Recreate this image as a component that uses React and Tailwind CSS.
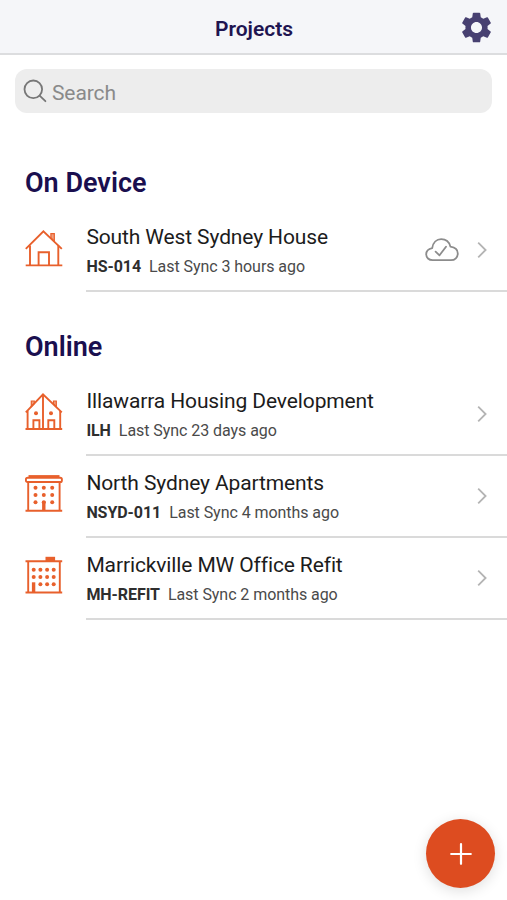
import { useState } from "react";
import { MdSettings } from "react-icons/md";

const onDevice = [
  { name: "South West Sydney House", code: "HS-014", sync: "Last Sync 3 hours ago", icon: HouseIcon, synced: true },
];

const online = [
  { name: "Illawarra Housing Development", code: "ILH", sync: "Last Sync 23 days ago", icon: DuplexIcon },
  { name: "North Sydney Apartments", code: "NSYD-011", sync: "Last Sync 4 months ago", icon: ApartmentsIcon },
  { name: "Marrickville MW Office Refit", code: "MH-REFIT", sync: "Last Sync 2 months ago", icon: OfficeIcon },
];

function BuildingSvg({ children }) {
  return (
    <svg viewBox="0 -2 40 44" className="h-[44px] w-[40px] shrink-0 text-[#e8602c]" fill="none" stroke="currentColor" strokeWidth="1.9">
      {children}
    </svg>
  );
}

function Windows({ cols, rows }) {
  return rows.map((y) =>
    cols.map((x) => (
      <circle key={`${x}-${y}`} cx={x} cy={y} r="2" fill="currentColor" stroke="none" />
    ))
  );
}

function HouseIcon() {
  return (
    <BuildingSvg>
      <path d="M1.8 18.9 19.4 1.3 37.8 18.9" />
      <path d="M6 15.5V35M34.3 15.5V35M1.7 35.4H38.3" />
      <path d="M14.6 35V22.3H25V35" />
      <path d="M26.9 7.8V3.7H30.3V11.5z" fill="currentColor" fillOpacity="0.6" strokeWidth="1.2" />
    </BuildingSvg>
  );
}

function DuplexIcon() {
  return (
    <BuildingSvg>
      <path d="M1.8 18.4 19 0.3 37.8 18.4" />
      <path d="M3.6 17V34.7M36.2 17V34.7M19 0.3V34.7M1.5 35H38.2" />
      <path d="M9.4 34.7V26.2H15.4V34.7M24.3 34.7V26.2H30.3V34.7" />
      <path d="M7.3 12.5V7H10.3V9.5zM29.5 10V7H32.3V12.8z" fill="currentColor" fillOpacity="0.6" strokeWidth="1.2" />
      <Windows cols={[12, 27]} rows={[19.3]} />
    </BuildingSvg>
  );
}

function ApartmentsIcon() {
  return (
    <BuildingSvg>
      <rect x="1.9" y="1.8" width="36" height="4.2" rx="1.6" />
      <path d="M4.5 0.2H35.5" strokeWidth="2.2" />
      <path d="M4.2 6V34.5M35.6 6V34.5M1.5 34.7H38.2" />
      <Windows cols={[11.5, 19.8, 28.2]} rows={[11.7, 19, 26.3]} />
      <path d="M19.8 25V34.5" strokeWidth="3.4" />
    </BuildingSvg>
  );
}

function OfficeIcon() {
  return (
    <BuildingSvg>
      <path d="M1.5 3.3H38.2M4.2 3.3V34.3M35.8 3.3V34.3M1.5 34.5H38.2" />
      <rect x="21.5" y="-1.2" width="9.6" height="4.5" fill="currentColor" stroke="none" />
      <Windows cols={[16.4, 23.1, 29.7]} rows={[11.7, 19, 26.3]} />
      <Windows cols={[9.7]} rows={[11.7, 19]} />
      <path d="M9.6 24.3V34.3" strokeWidth="3.4" />
    </BuildingSvg>
  );
}

function CloudCheck() {
  return (
    <svg viewBox="0 0 34 24" className="mr-[18.5px] h-6 w-[34px] shrink-0" fill="none" stroke="#8c8c8c" strokeWidth="1.8" strokeLinecap="round" strokeLinejoin="round">
      <path d="M7.6 22.2C3.8 22.2 1.2 19.7 1.2 16.3C1.2 13 3.6 10.8 7.2 10.1C8 4.9 11.4 1.2 16.2 1.2C20.8 1.2 24.2 3.9 25.4 8.6C30 9.2 32.8 11.6 32.8 15.4C32.8 19.3 29.9 22.2 26 22.2z" />
      <path d="M10.6 13.6 14.5 17.3 21 8.8" />
    </svg>
  );
}

function ProjectRow({ project }) {
  const Icon = project.icon;
  return (
    <li className="flex h-[82px] items-stretch pl-6">
      <div className="flex items-center pb-0.5">
        <Icon />
      </div>
      <div className="ml-[22px] flex flex-1 items-center border-b-2 border-[#dadada] pr-5">
        <div className="flex-1 pt-[3px] pl-[0.4px] whitespace-nowrap">
          <p className="text-[21px] leading-7 tracking-[-0.12px] text-[#1c1c1c]">{project.name}</p>
          <p className="mt-0.5 text-base leading-7 tracking-[-0.06px] text-[#4a4a4a]">
            <span className="mr-2 font-bold text-[#2e2e2e]">{project.code}</span>
            {project.sync}
          </p>
        </div>
        {project.synced && <CloudCheck />}
        <svg viewBox="0 0 10 18" className="h-[18px] w-[10px] shrink-0" fill="none" stroke="#b4b4b4" strokeWidth="1.8">
          <path d="M1.2 1.6 8.6 9 1.2 16.4" />
        </svg>
      </div>
    </li>
  );
}

function Section({ title, projects }) {
  return (
    <section>
      <h2 className="pt-px pl-[25px] text-[27px] leading-8 font-semibold text-[#1a0f4f]">{title}</h2>
      <ul className="mt-[11px]">
        {projects.map((p) => (
          <ProjectRow key={p.code} project={p} />
        ))}
      </ul>
    </section>
  );
}

function App() {
  const [query, setQuery] = useState("");

  const filterProjects = (list) =>
    list.filter((p) => p.name.toLowerCase().includes(query.toLowerCase()));

  return (
    <div className="flex h-[900px] w-full flex-col overflow-hidden bg-white font-[Roboto,sans-serif]">
      <header className="grid h-[55px] shrink-0 grid-cols-[1fr_auto_1fr] items-center border-b-2 border-[#dcdddf] bg-[#f5f6f9] pt-0.5">
        <h1 className="col-start-2 pt-0.5 pl-px text-[21px] leading-7 font-semibold text-[#1f1551]">Projects</h1>
        <button className="mr-3 justify-self-end" aria-label="Settings">
          <MdSettings className="size-[37px] text-[#474071]" />
        </button>
      </header>

      <label className="mx-[15px] mt-3.5 flex h-11 shrink-0 items-center rounded-xl bg-[#ededed] pl-2">
        <svg viewBox="0 0 24 24" className="mr-[5px] size-6 shrink-0" fill="none" stroke="#777777" strokeWidth="1.8" strokeLinecap="round">
          <circle cx="10.3" cy="10.3" r="8.8" />
          <path d="M16.6 16.6 22.4 22.2" />
        </svg>
        <input
          type="text"
          value={query}
          onChange={(e) => setQuery(e.target.value)}
          placeholder="Search"
          className="w-full bg-transparent pt-1.5 text-[21px] tracking-[-0.1px] outline-none placeholder:text-[#8a8a8a]"
        />
      </label>

      <main className="flex flex-1 flex-col gap-[38px] pt-[53px]">
        <Section title="On Device" projects={filterProjects(onDevice)} />
        <Section title="Online" projects={filterProjects(online)} />
      </main>

      <button
        aria-label="Add project"
        className="mr-3 mb-3 flex size-[69px] shrink-0 items-center justify-center self-end rounded-full bg-[#dd4c20] shadow-[0_3px_14px_rgba(0,0,0,0.13)]"
      >
        <svg viewBox="0 0 22 22" className="size-[22px]" fill="none" stroke="white" strokeWidth="2.2" strokeLinecap="round">
          <path d="M11 1.2V20.8M1.2 11H20.8" />
        </svg>
      </button>
    </div>
  );
}

export default App;
